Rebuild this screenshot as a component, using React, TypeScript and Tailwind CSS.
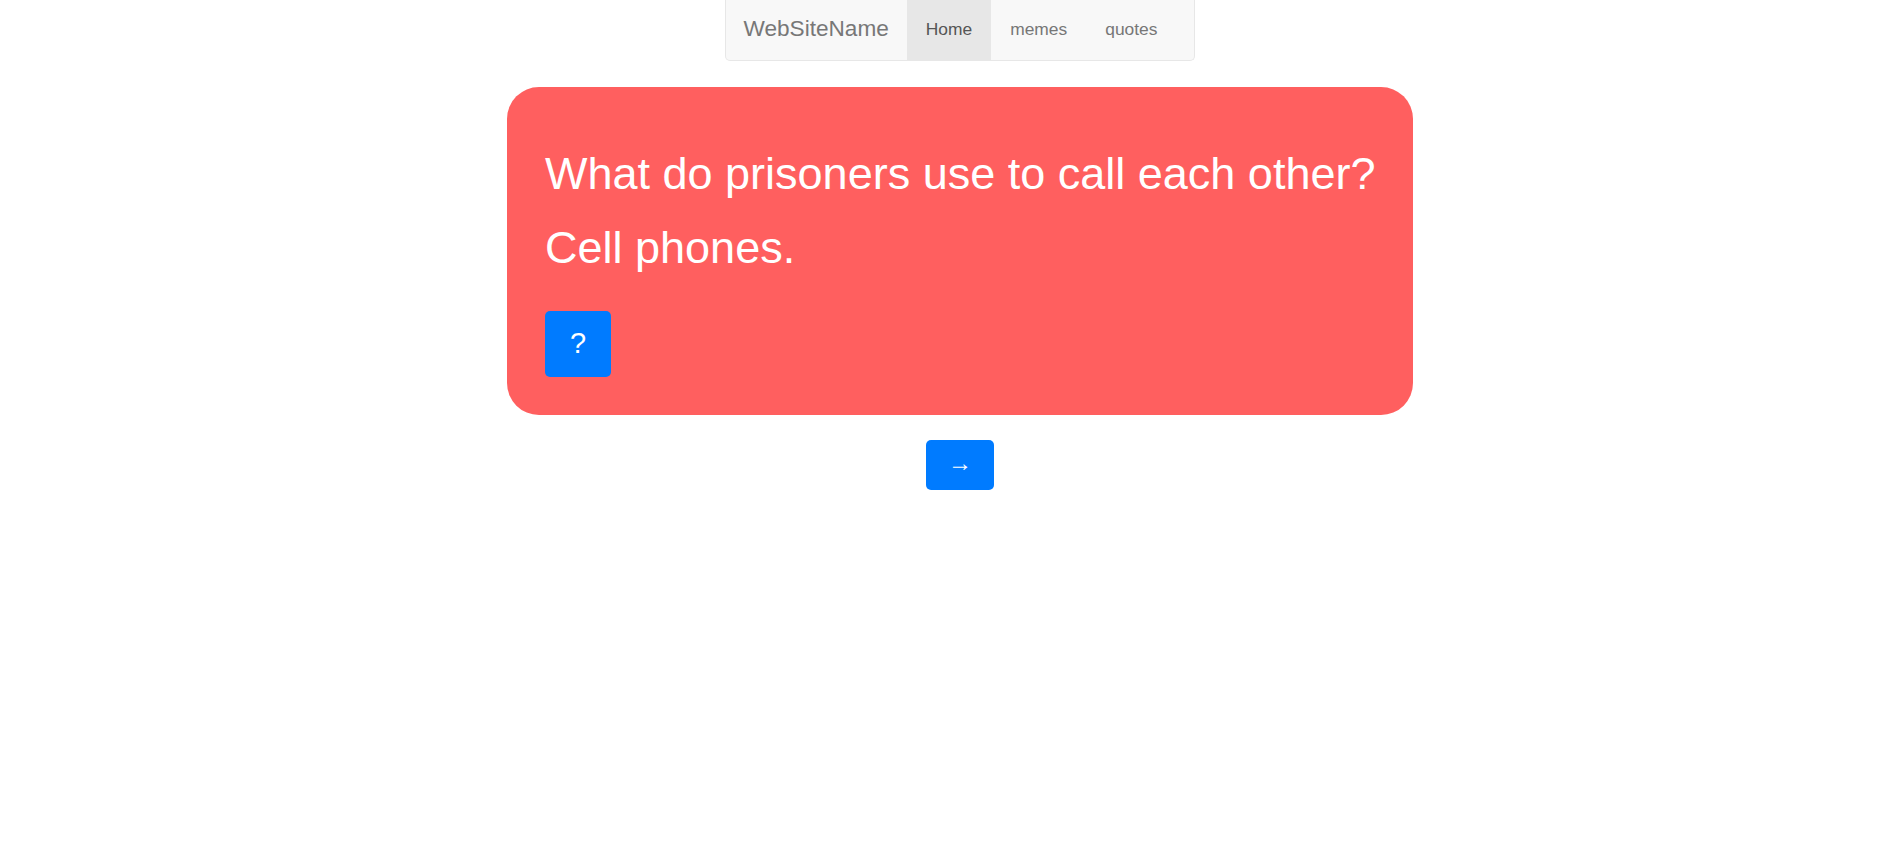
import { useState } from "react";

const jokes = [
  { q: "What do prisoners use to call each other?", a: "Cell phones." },
];

function Navbar() {
  return (
    <nav className="flex h-[61px] items-stretch rounded-b-[5px] border border-t-0 border-[#e7e7e7] bg-[#f8f8f8] text-[#777]">
      <a className="flex items-center px-[18px] pb-[2px] text-[22.6px]">WebSiteName</a>
      <a className="flex items-center bg-[#e7e7e7] px-[19px] pb-[2px] text-[17.4px] text-[#555]">Home</a>
      <a className="flex items-center px-[19px] pb-[2px] text-[17.4px]">memes</a>
      <a className="flex items-center px-[19px] pb-[2px] text-[17.4px]">quotes</a>
      <div className="w-[18px]" />
    </nav>
  );
}

export default function App() {
  const [idx, setIdx] = useState(0);
  const [shown, setShown] = useState(true);
  const joke = jokes[idx];

  return (
    <div className="flex min-h-screen flex-col items-center bg-white pl-[17px] font-['Liberation_Sans',Arial,sans-serif]">
      <Navbar />
      <div className="mt-[26px] w-[906px] rounded-[32px] bg-[#ff5f5f] pt-[50px] pr-[20px] pb-[38px] pl-[38px] text-white">
        <p className="text-[45px] leading-[74px]">{joke.q}</p>
        <p className="text-[45px] leading-[74px]">{shown ? joke.a : "\u00a0"}</p>
        <button
          onClick={() => setShown(!shown)}
          className="mt-[26px] flex h-[66px] w-[66px] items-center justify-center rounded-[5px] bg-[#007bff] text-[29px] text-white"
        >
          ?
        </button>
      </div>
      <button
        onClick={() => setIdx((idx + 1) % jokes.length)}
        className="mt-[25px] flex h-[50px] w-[68px] items-center justify-center rounded-[5px] bg-[#007bff] pb-[4px] text-[24px] text-white"
      >
        →
      </button>
    </div>
  );
}
